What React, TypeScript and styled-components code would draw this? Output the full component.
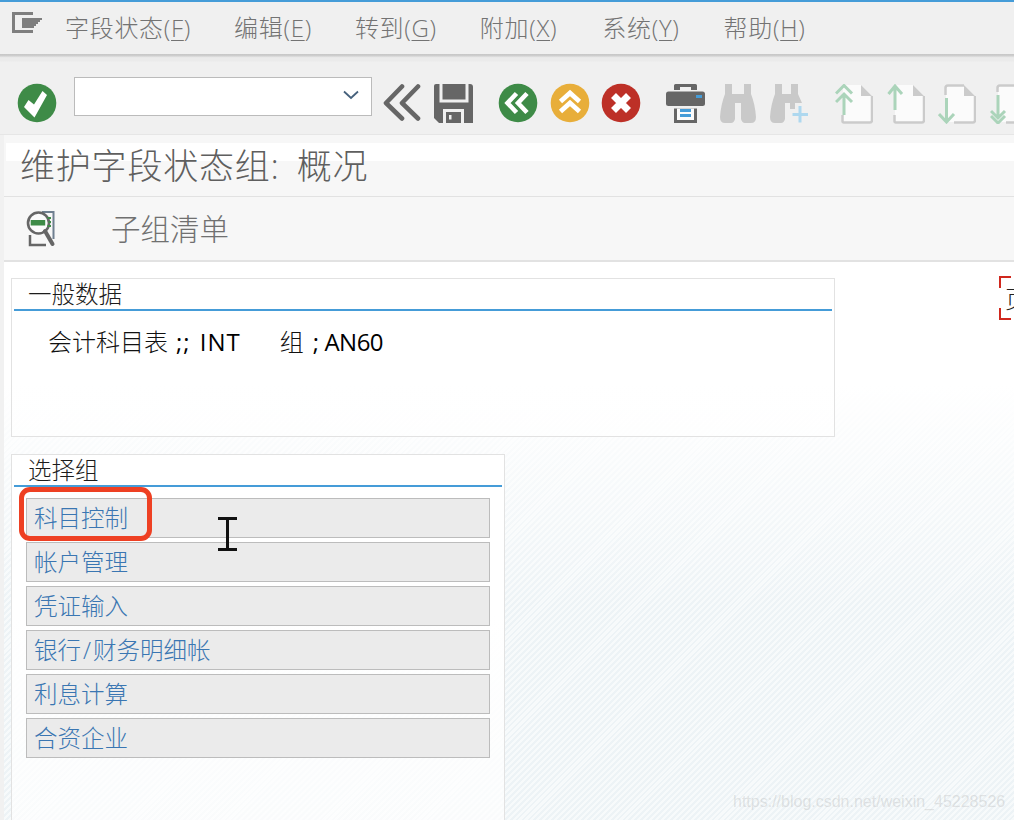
import React from "react";
import styled, { createGlobalStyle } from "styled-components";

const FONT = `"Open Sans", "Noto Sans CJK SC", sans-serif`;

const Global = createGlobalStyle`
  html, body { margin: 0; padding: 0; background: #fff; }
  body { font-family: ${FONT}; }
`;

const Page = styled.div`
  position: relative;
  width: 1014px;
  height: 820px;
  overflow: hidden;
  display: flex;
  flex-direction: column;
  background: #f0f0f0;
`;
const TopLine = styled.div`
  height: 2px;
  background: #459cd8;
  flex: none;
`;
const MenuBar = styled.nav`
  height: 52px;
  flex: none;
  display: flex;
  align-items: flex-start;
  padding: 10px 0 0 12px;
  box-sizing: border-box;
`;
const MenuItem = styled.span<{ $ml: number }>`
  margin: 1px 0 0 ${(p) => p.$ml}px;
  font-size: 24px;
  font-weight: 300;
  line-height: 30px;
  letter-spacing: 0.7px;
  color: #737373;
  white-space: nowrap;
  u { text-underline-offset: 3px; text-decoration-thickness: 1px; }
`;
const MenuShadow = styled.div`
  height: 8px;
  flex: none;
  background: linear-gradient(#c6c6c6 0, #cfcfcf 2px, #e6e6e6 3px, #ebebeb 4px, #ebebeb 7px, #f0f0f0 8px);
`;
const Toolbar = styled.div`
  height: 73px;
  flex: none;
  display: flex;
  align-items: flex-start;
  box-sizing: border-box;
  border-bottom: 1px solid #e6e6e6;
`;
const Tool = styled.span<{ $ml: number; $top?: number }>`
  display: block;
  flex: none;
  margin-left: ${(p) => p.$ml}px;
  margin-top: ${(p) => p.$top ?? 22}px;
  line-height: 0;
`;
const Combo = styled.div`
  flex: none;
  width: 298px;
  height: 39px;
  margin-left: 17px;
  margin-top: 15px;
  box-sizing: border-box;
  border: 1px solid #bbb;
  background: #fff;
  display: flex;
  align-items: center;
  justify-content: flex-end;
  padding: 0 12px 3px 0;
`;
const Body = styled.div`
  flex: 1;
  min-height: 0;
  display: flex;
`;
const LeftStrip = styled.div`
  width: 4px;
  flex: none;
  background: #f1f1f1;
`;
const Main = styled.div`
  flex: 1;
  min-width: 0;
  display: flex;
  flex-direction: column;
`;
const TitleBar = styled.div`
  position: relative;
  height: 62px;
  flex: none;
  box-sizing: border-box;
  background: #f7f7f7;
  border-bottom: 1px solid #e2e2e2;
  padding-left: 16px;
  display: flex;
  align-items: center;
  &::before {
    content: "";
    position: absolute;
    left: 2px;
    right: 0;
    top: 8px;
    height: 18px;
    background: #fff;
  }
`;
const Title = styled.h1`
  position: relative;
  margin: 0;
  font-size: 35px;
  font-weight: 300;
  line-height: 44px;
  letter-spacing: 0.8px;
  word-spacing: 7px;
  color: #5f5f5f;
  white-space: nowrap;
`;
const SubBar = styled.div`
  height: 65px;
  flex: none;
  box-sizing: border-box;
  background: #f7f7f7;
  border-bottom: 2px solid #e2e2e2;
  display: flex;
  align-items: center;
  padding-left: 19px;
`;
const SubLabel = styled.span`
  margin-left: 54px;
  font-size: 29.5px;
  font-weight: 300;
  line-height: 38px;
  color: #707070;
`;
const Content = styled.main`
  flex: 1;
  min-height: 0;
  padding: 14px 0 0 7px;
  background:
    linear-gradient(#fff 0, #fff 22%, rgba(255, 255, 255, 0) 62%),
    repeating-linear-gradient(135deg, #edf3f6 0, #edf3f6 2px, #f7fafb 2px, #f7fafb 4.2px);
`;
const TopRow = styled.div`
  display: flex;
  align-items: flex-start;
`;
const Panel = styled.section<{ $w: number; $h: number; $mt: number }>`
  flex: none;
  width: ${(p) => p.$w}px;
  height: ${(p) => p.$h}px;
  margin-top: ${(p) => p.$mt}px;
  box-sizing: border-box;
  border: 1px solid #e2e2e2;
  background: linear-gradient(#fff 40%, rgba(255, 255, 255, 0.65) 100%);
`;
const PanelTitle = styled.h2`
  margin: 0 2px;
  height: 32px;
  box-sizing: border-box;
  padding-left: 14px;
  border-bottom: 2px solid #459cd8;
  font-size: 23.5px;
  font-weight: 300;
  line-height: 30px;
  color: #1c1c1c;
`;
const DataRow = styled.div`
  display: flex;
  padding: 15px 0 0 36px;
  font-size: 24px;
  font-weight: 300;
  line-height: 32px;
  color: #111;
  white-space: nowrap;
`;
const DataText = styled.span<{ $ml?: number }>`
  margin-left: ${(p) => p.$ml ?? 0}px;
`;
const DataLatin = styled.span<{ $ml: number; $ls: number; $ws: number }>`
  margin-left: ${(p) => p.$ml}px;
  font-weight: 400;
  letter-spacing: ${(p) => p.$ls}px;
  word-spacing: ${(p) => p.$ws}px;
  color: #000;
`;
const Marker = styled.div`
  position: relative;
  flex: none;
  width: 40px;
  height: 44px;
  margin-left: 164px;
  overflow: hidden;
  &::before, &::after {
    content: "";
    position: absolute;
    left: 0;
    width: 10px;
    height: 10px;
    border-left: 2.5px solid #d0281e;
  }
  &::before { top: 0; border-top: 2.5px solid #d0281e; }
  &::after { bottom: 0; border-bottom: 2.5px solid #d0281e; }
`;
const MarkerText = styled.span`
  display: block;
  padding: 8px 0 0 6px;
  font-size: 24px;
  font-weight: 300;
  line-height: 30px;
  color: #222;
`;
const ButtonList = styled.div`
  display: flex;
  flex-direction: column;
  gap: 4px;
  margin: 11px 0 0 14px;
  width: 464px;
`;
const GroupButton = styled.button`
  height: 40px;
  box-sizing: border-box;
  border: 1px solid #bcbcbc;
  background: #ebebeb;
  padding: 0 0 2px 7px;
  text-align: left;
  font-family: ${FONT};
  font-size: 23.5px;
  font-weight: 300;
  color: #3a76b2;
`;
const Slash = styled.span`
  margin: 0 2px;
`;
const Annotation = styled.div`
  position: absolute;
  left: 19px;
  top: 487px;
  width: 133px;
  height: 54px;
  box-sizing: border-box;
  border: 5px solid #ee4023;
  border-radius: 11px;
`;
const Cursor = styled.svg`
  position: absolute;
  left: 218px;
  top: 517px;
`;
const Watermark = styled.div`
  position: absolute;
  left: 733px;
  top: 791px;
  font-family: "Liberation Sans", sans-serif;
  font-size: 16px;
  line-height: 22px;
  color: rgba(170, 170, 170, 0.3);
  white-space: nowrap;
`;

const MenuIcon = () => (
  <svg width="30" height="22" viewBox="0 0 30 22" fill="#7f7f7f" style={{ display: "block" }}>
    <path d="M0 0H21V3H3V18H21V21H0Z" />
    <path d="M10 6H30V8H28V10H26V12H24V14H22V16H10Z" />
  </svg>
);
const Circle = ({ fill, children }: { fill: string; children: React.ReactNode }) => (
  <svg width="40" height="40" viewBox="0 0 40 40">
    <circle cx="20" cy="20" r="19.3" fill={fill} />
    {children}
  </svg>
);
const BackArrows = () => (
  <svg width="38" height="40" viewBox="0 0 38 40" fill="none" stroke="#666" strokeWidth="4.6" strokeLinecap="round" strokeLinejoin="round">
    <path d="M19 3.5 3 20 19 35.5" />
    <path d="M35 3.5 19 20 35 35.5" />
  </svg>
);
const SaveIcon = () => (
  <svg width="39" height="39" viewBox="0 0 39 39">
    <path d="M2 0H36Q39 0 39 3V39H5L0 34V2Q0 0 2 0Z" fill="#666" />
    <path d="M7 0V17H33V0" fill="none" stroke="#f0f0f0" strokeWidth="3" />
    <rect x="9" y="25" width="21" height="14" fill="#f0f0f0" />
    <rect x="12" y="28" width="15" height="11" fill="#666" />
    <rect x="15" y="31" width="2.5" height="4.5" fill="#f0f0f0" />
  </svg>
);
const PrinterIcon = () => (
  <svg width="39" height="39" viewBox="0 0 39 39">
    <path d="M8 6V1.5Q8 0 9.5 0H29.5Q31 0 31 1.5V6H25V3H14V6Z" fill="#666" />
    <rect x="0" y="7.5" width="39" height="14.5" rx="2.5" fill="#666" />
    <rect x="30" y="11" width="6" height="3" fill="#459cd8" />
    <rect x="8" y="24.5" width="23" height="14.5" fill="#666" />
    <rect x="11" y="24.5" width="17" height="11.5" fill="#fbfbfb" />
    <rect x="14" y="25" width="11" height="3" fill="#459cd8" />
    <rect x="14" y="30" width="11" height="3" fill="#459cd8" />
  </svg>
);
const Binoculars = () => (
  <svg width="36" height="39" viewBox="0 0 36 39">
    <path
      d="M5 0H12V10H24V0H31V10Q35 20 36 33Q36 39 31 39H25Q22 39 21 35V19H15V35Q14 39 11 39H5Q0 39 0 33Q1 20 5 10Z"
      fill="#c9c9c9"
    />
  </svg>
);
const BinocularsPlus = () => (
  <svg width="39" height="39" viewBox="0 0 39 39">
    <path
      d="M5 0H12V10H21V0H28V10L32 19H25V25H20V19H15V35Q14 39 11 39H5Q0 39 0 33Q1 20 5 10Z"
      fill="#c9c9c9"
    />
    <path d="M30 22V38.5M22.5 30.5H38" stroke="#aed8ef" strokeWidth="3" fill="none" />
  </svg>
);
type Arrow = "up2" | "up1" | "down1" | "down2";
const arrowPaths: Record<Arrow, string> = {
  up2: "M1 9.5 9 1.5 17 9.5M1 18 9 10 17 18M9 10V31",
  up1: "M1.5 10 8 2 15 10M8 3V26",
  down1: "M1 30 8.5 38 16 30M8.5 14V37",
  down2: "M1 27 8 34 15 27M1 32 8 39 15 32M8 11V33",
};
const pageLines: Record<Arrow, string> = {
  up2: "M37 12V36Q37 38.5 35 38.5H9Q7.5 38.5 7.5 37V31",
  up1: "M37 12V36Q37 38.5 35 38.5H9Q7.5 38.5 7.5 37V31",
  down1: "M26 1.5H10Q7.5 1.5 7.5 4V11M37 12V36Q37 38.5 35 38.5H16",
  down2: "M26 1.5H10Q7.5 1.5 7.5 4V8M37 12V36Q37 38.5 35 38.5H16",
};
const FileArrow = ({ kind }: { kind: Arrow }) => (
  <svg width="38" height="40" viewBox="0 0 38 40" fill="none">
    <path d="M8 1H26L37 12V38H8Z" fill="#fbfbfb" />
    <path d="M26 1 37 12H26Z" fill="#cbcbcb" />
    <path d={pageLines[kind]} stroke="#cbcbcb" strokeWidth="2.5" />
    <path d={arrowPaths[kind]} stroke="#abd4ba" strokeWidth="3" />
  </svg>
);
const InspectIcon = () => (
  <svg width="34" height="40" viewBox="0 0 34 40" fill="none">
    <path d="M19 3H30.500V30" stroke="#6f7f90" strokeWidth="2" />
    <path d="M7 26V36H23" stroke="#666" strokeWidth="2.5" />
    <circle cx="15.500" cy="14" r="10.500" fill="#fbfbfb" stroke="#666" strokeWidth="2.600" />
    <rect x="7.700" y="11" width="14.500" height="5.500" fill="#3e8b47" />
    <path d="M24.500 9H28M25.500 13H28M24.500 17H28" stroke="#3e8b47" strokeWidth="1.800" />
    <path d="M22 22 29.500 35" stroke="#666" strokeWidth="4" strokeLinecap="round" />
  </svg>
);

const menus: [string, string, number][] = [
  ["字段状态", "F", 23],
  ["编辑", "E", 43],
  ["转到", "G", 43],
  ["附加", "X", 43],
  ["系统", "Y", 45],
  ["帮助", "H", 44],
];
const groups = ["科目控制", "帐户管理", "凭证输入", "银行/财务明细帐", "利息计算", "合资企业"];

export default function App() {
  return (
    <Page>
      <Global />
      <TopLine />
      <MenuBar>
        <MenuIcon />
        {menus.map(([t, k, ml]) => (
          <MenuItem key={k} $ml={ml}>
            {t}(<u>{k}</u>)
          </MenuItem>
        ))}
      </MenuBar>
      <MenuShadow />
      <Toolbar>
        <Tool $ml={17} $top={21}>
          <Circle fill="#3e8b47">
            <path d="M7 24 11.500 17 17 21.500 25.500 8 30 12 17.500 34.500Z" fill="#fff" />
          </Circle>
        </Tool>
        <Combo>
          <svg width="16" height="10" viewBox="0 0 16 10" fill="none">
            <path d="M1 1.500 8 8 15 1.500" stroke="#46617c" strokeWidth="1.800" />
          </svg>
        </Combo>
        <Tool $ml={11} $top={21}>
          <BackArrows />
        </Tool>
        <Tool $ml={13}>
          <SaveIcon />
        </Tool>
        <Tool $ml={25} $top={21}>
          <Circle fill="#3e8b47">
            <path d="M18.500 10.500 9.500 20 18.500 29.500M29 10.500 20 20 29 29.500" fill="none" stroke="#fff" strokeWidth="4.600" />
          </Circle>
        </Tool>
        <Tool $ml={12} $top={21}>
          <Circle fill="#e8ae3a">
            <path d="M10.500 18.500 20 10 29.500 18.500M10.500 28.500 20 20 29.500 28.500" fill="none" stroke="#fff" strokeWidth="4.800" />
          </Circle>
        </Tool>
        <Tool $ml={11} $top={21}>
          <Circle fill="#bd3027">
            <path d="M12.500 12.500 27.500 27.500M27.500 12.500 12.500 27.500" fill="none" stroke="#fff" strokeWidth="7" />
          </Circle>
        </Tool>
        <Tool $ml={25}>
          <PrinterIcon />
        </Tool>
        <Tool $ml={15}>
          <Binoculars />
        </Tool>
        <Tool $ml={14}>
          <BinocularsPlus />
        </Tool>
        <Tool $ml={26}>
          <FileArrow kind="up2" />
        </Tool>
        <Tool $ml={14}>
          <FileArrow kind="up1" />
        </Tool>
        <Tool $ml={13}>
          <FileArrow kind="down1" />
        </Tool>
        <Tool $ml={14}>
          <FileArrow kind="down2" />
        </Tool>
      </Toolbar>
      <Body>
        <LeftStrip />
        <Main>
          <TitleBar>
            <Title>维护字段状态组: 概况</Title>
          </TitleBar>
          <SubBar>
            <InspectIcon />
            <SubLabel>子组清单</SubLabel>
          </SubBar>
          <Content>
            <TopRow>
              <Panel $w={824} $h={159} $mt={2}>
                <PanelTitle>一般数据</PanelTitle>
                <DataRow>
                  <DataText>会计科目表</DataText>
                  <DataLatin $ml={8} $ls={1} $ws={2}>;; INT</DataLatin>
                  <DataText $ml={39}>组</DataText>
                  <DataLatin $ml={9} $ls={-0.5} $ws={0}>; AN60</DataLatin>
                </DataRow>
              </Panel>
              <Marker>
                <MarkerText>页</MarkerText>
              </Marker>
            </TopRow>
            <Panel $w={494} $h={400} $mt={17}>
              <PanelTitle>选择组</PanelTitle>
              <ButtonList>
                {groups.map((g) => {
                  const [a, b] = g.split("/");
                  return (
                    <GroupButton key={g}>
                      {a}
                      {b ? (
                        <>
                          <Slash>/</Slash>
                          {b}
                        </>
                      ) : null}
                    </GroupButton>
                  );
                })}
              </ButtonList>
            </Panel>
          </Content>
        </Main>
      </Body>
      <Annotation />
      <Cursor width="19" height="34" viewBox="0 0 19 34">
        <path d="M0 1.500H19M0 32.500H19M9.500 1V33" stroke="#111" strokeWidth="3" fill="none" />
      </Cursor>
      <Watermark>https://blog.csdn.net/weixin_45228526</Watermark>
    </Page>
  );
}
